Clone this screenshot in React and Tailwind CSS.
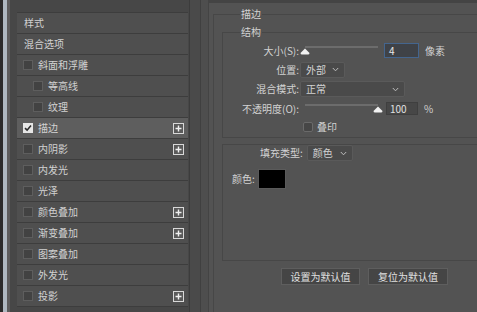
import React from 'react'

const rows = [
  { label: '样式', head: true },
  { label: '混合选项', head: true },
  { label: '斜面和浮雕' },
  { label: '等高线', indent: true },
  { label: '纹理', indent: true },
  { label: '描边', checked: true, plus: true, active: true },
  { label: '内阴影', plus: true },
  { label: '内发光' },
  { label: '光泽' },
  { label: '颜色叠加', plus: true },
  { label: '渐变叠加', plus: true },
  { label: '图案叠加' },
  { label: '外发光' },
  { label: '投影', plus: true },
]

function Checkbox({ checked }) {
  if (checked) {
    return (
      <span className="flex h-[10px] w-[10px] items-center justify-center bg-[#e6e6e6]">
        <svg width="8" height="8" viewBox="0 0 8 8">
          <path d="M1 4.2 L3.1 6.2 L7 1.6" fill="none" stroke="#2a2a2a" strokeWidth="1.6" />
        </svg>
      </span>
    )
  }
  return <span className="h-[10px] w-[10px] border border-[#5e5e5e] bg-[#424242]" />
}

function Plus() {
  return (
    <span className="flex h-[11px] w-[11px] items-center justify-center border border-[#d8d8d8] bg-[#5a5a5a]">
      <svg width="7" height="7" viewBox="0 0 7 7">
        <path d="M3.5 0.5 V6.5 M0.5 3.5 H6.5" stroke="#f0f0f0" strokeWidth="1.4" />
      </svg>
    </span>
  )
}

function Chevron() {
  return (
    <svg width="7" height="5" viewBox="0 0 7 5">
      <path d="M0.8 1 L3.5 3.8 L6.2 1" fill="none" stroke="#bdbdbd" strokeWidth="1" />
    </svg>
  )
}

function Select({ value, width }) {
  return (
    <div
      className={`flex h-[16px] ${width} items-center justify-between rounded-[2px] border border-[#5a5a5a] bg-[#4a4a4a] pl-[5px] pr-[5px]`}
    >
      <span>{value}</span>
      <Chevron />
    </div>
  )
}

function Thumb() {
  return (
    <svg width="10" height="7" viewBox="0 0 10 7">
      <path d="M5 0.5 L9.5 5 Q9.5 6.5 8 6.5 H2 Q0.5 6.5 0.5 5 Z" fill="#f2f2f2" />
    </svg>
  )
}

function Slider({ at }) {
  return (
    <div className="relative h-[19px] w-[82px]">
      <div className="absolute left-[5px] top-[5px] h-[2px] w-[73px] bg-[#6c6c6c]" />
      <div className={`absolute top-[7px] ${at === 'start' ? 'left-0' : 'left-[73px]'}`}>
        <Thumb />
      </div>
    </div>
  )
}

export default function App() {
  return (
    <div
      className="flex h-[312px] w-[477px] overflow-hidden bg-[#535353] text-[10px] leading-none text-[#d2d2d2]"
      style={{ fontFamily: '"Noto Sans CJK SC", "Noto Sans", sans-serif' }}
    >
      {/* window edge */}
      <div className="w-[3px] bg-[#2b2b2b]" />
      <div className="w-[4px] bg-[#aeb8c0]" />
      <div className="w-[3px] bg-[#5c5c5c]" />

      {/* style list */}
      <div className="flex w-[180px] flex-col border-r border-[#3c3c3c] bg-[#474747] pl-[7px] pr-[1px] pt-[12px]">
        <div className="border-t border-[#3d3d3d]">
          {rows.map((r) => (
            <div
              key={r.label}
              className={`flex h-[21px] items-center border-b border-[#3d3d3d] pr-[4px] ${
                r.active ? 'bg-[#5e5e5e]' : 'bg-[#4f4f4f]'
              } ${r.head ? 'pl-[7px]' : r.indent ? 'pl-[16px]' : 'pl-[6px]'}`}
            >
              {!r.head && <Checkbox checked={r.checked} />}
              <span className={r.head ? '' : 'ml-[5px]'}>{r.label}</span>
              <span className="flex-1" />
              {r.plus && <Plus />}
            </div>
          ))}
        </div>
      </div>

      {/* divider */}
      <div className="w-[10px] bg-[#4a4a4a]" />
      <div className="w-[1px] bg-[#404040]" />
      <div className="w-[7px] bg-[#4e4e4e]" />
      <div className="w-[1px] bg-[#444444]" />

      {/* options */}
      <div className="flex flex-1 flex-col border-t-[3px] border-[#444444] pt-[6px]">
        <fieldset className="ml-[4px] flex-1 border-l border-t border-[#474747] pl-[8px]">
          <legend className="ml-[18px] px-[1px]">描边</legend>

          <fieldset className="mt-[8px] h-[111px] border-b border-l border-t border-[#474747]">
            <legend className="ml-[17px] px-[1px]">结构</legend>
            <div className="flex flex-col pt-[4px]">
              <div className="flex h-[19px] items-center">
                <span className="w-[76px] text-right">大小(S):</span>
                <span className="ml-[1px]">
                  <Slider at="start" />
                </span>
                <div className="ml-[2px] flex h-[15px] w-[35px] items-center border border-[#44658e] bg-[#3f4247] pl-[4px] text-[#e8e8e8]">
                  4
                </div>
                <span className="ml-[6px]">像素</span>
              </div>
              <div className="flex h-[19px] items-center">
                <span className="w-[76px] text-right">位置:</span>
                <span className="ml-[1px]">
                  <Select value="外部" width="w-[45px]" />
                </span>
              </div>
              <div className="flex h-[20px] items-center">
                <span className="w-[76px] text-right">混合模式:</span>
                <span className="ml-[1px]">
                  <Select value="正常" width="w-[105px]" />
                </span>
              </div>
              <div className="flex h-[19px] items-center">
                <span className="w-[76px] text-right">不透明度(O):</span>
                <span className="ml-[1px]">
                  <Slider at="end" />
                </span>
                <div className="ml-[4px] flex h-[13px] w-[32px] items-center border border-[#3f3f3f] bg-[#474747] pl-[3px] text-[#e0e0e0]">
                  100
                </div>
                <span className="ml-[6px]">%</span>
              </div>
              <div className="flex h-[17px] items-center pl-[80px]">
                <span className="h-[10px] w-[10px] rounded-[2px] border border-[#6a6a6a] bg-[#464646]" />
                <span className="ml-[4px]">叠印</span>
              </div>
            </div>
          </fieldset>

          <div className="mt-[6px] h-[117px] border-b border-l border-t border-[#474747]">
            <div className="flex items-center pl-[37px]">
              <span>填充类型:</span>
              <span className="ml-[4px]">
                <Select value="颜色" width="w-[46px]" />
              </span>
            </div>
            <div className="mt-[8px] flex items-center pl-[9px]">
              <span>颜色:</span>
              <span className="ml-[3px] h-[20px] w-[28px] border border-[#5a5a5a] bg-black" />
            </div>
          </div>

          <div className="mt-[7px] flex gap-[8px] pl-[59px]">
            <button className="h-[17px] w-[79px] border border-[#5e5e5e] bg-[#454545] text-[#e0e0e0]">
              设置为默认值
            </button>
            <button className="h-[17px] w-[80px] border border-[#5e5e5e] bg-[#454545] text-[#e0e0e0]">
              复位为默认值
            </button>
          </div>
        </fieldset>
      </div>
    </div>
  )
}
